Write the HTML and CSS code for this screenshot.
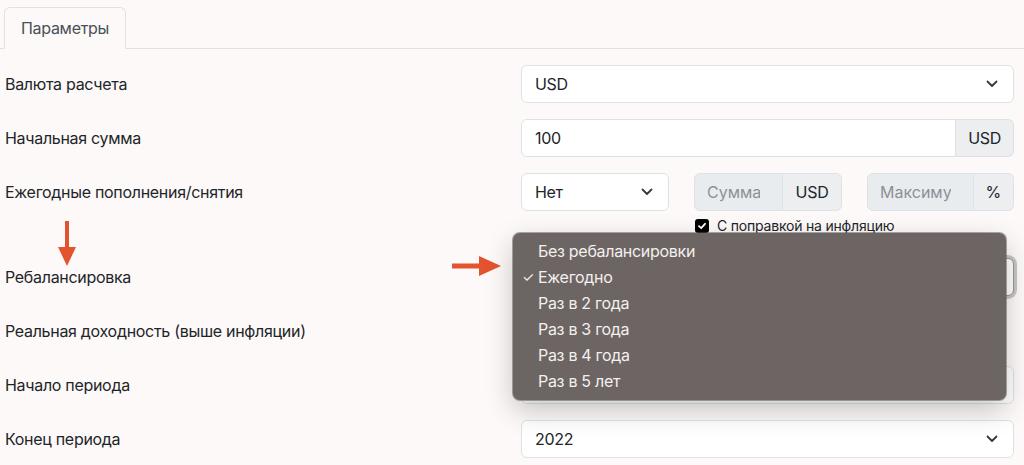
FILE: index.html
```html
<!DOCTYPE html>
<html lang="ru">
<head>
<meta charset="utf-8">
<link rel="stylesheet" href="styles.css">
</head>
<body>
<div class="tabs">
  <div class="tab">Параметры</div>
</div>
<div class="form">
  <div class="row">
    <div class="label">Валюта расчета</div>
    <div class="control">
      <div class="select"><span>USD</span><svg class="chev" viewBox="0 0 12 8" width="12" height="8"><polyline points="1.5,1.5 6,6 10.5,1.5"/></svg></div>
    </div>
  </div>
  <div class="row">
    <div class="label">Начальная сумма</div>
    <div class="control">
      <div class="group">
        <div class="input grow">100</div>
        <div class="addon">USD</div>
      </div>
    </div>
  </div>
  <div class="row">
    <div class="label">Ежегодные пополнения/снятия</div>
    <div class="control triple">
      <div class="select"><span>Нет</span><svg class="chev" viewBox="0 0 12 8" width="12" height="8"><polyline points="1.5,1.5 6,6 10.5,1.5"/></svg></div>
      <div class="group">
        <input class="input grow disabled" disabled placeholder="Сумма пополнения">
        <div class="addon wide">USD</div>
      </div>
      <div class="group">
        <input class="input grow disabled" disabled placeholder="Максимум изъятия">
        <div class="addon">%</div>
      </div>
      <label class="check"><span class="box"><svg viewBox="0 0 10 10" width="10" height="10"><polyline points="2,5.2 4.2,7.2 8,2.8"/></svg></span>С поправкой на инфляцию</label>
    </div>
  </div>
  <div class="row rebalance">
    <div class="label">Ребалансировка</div>
    <div class="control">
      <div class="select focused"><span></span><svg class="chev" viewBox="0 0 12 8" width="12" height="8"><polyline points="1.5,1.5 6,6 10.5,1.5"/></svg></div>
      <ul class="menu">
        <li>Без ребалансировки</li>
        <li class="checked">Ежегодно</li>
        <li>Раз в 2 года</li>
        <li>Раз в 3 года</li>
        <li>Раз в 4 года</li>
        <li>Раз в 5 лет</li>
      </ul>
    </div>
    <svg class="arrow-down" viewBox="0 0 18 45" width="18" height="45"><rect x="7" y="0" width="4" height="27"/><polygon points="0,26 18,26 9,45"/></svg>
    <svg class="arrow-right" viewBox="0 0 49 20" width="49" height="20"><rect x="0" y="7.5" width="28" height="5"/><polygon points="27,0 49,10 27,20"/></svg>
  </div>
  <div class="row">
    <div class="label">Реальная доходность (выше инфляции)</div>
    <div class="control">
      <div class="spacer"></div>
    </div>
  </div>
  <div class="row">
    <div class="label">Начало периода</div>
    <div class="control">
      <div class="select"><span></span><svg class="chev" viewBox="0 0 12 8" width="12" height="8"><polyline points="1.5,1.5 6,6 10.5,1.5"/></svg></div>
    </div>
  </div>
  <div class="row">
    <div class="label">Конец периода</div>
    <div class="control">
      <div class="select"><span>2022</span><svg class="chev" viewBox="0 0 12 8" width="12" height="8"><polyline points="1.5,1.5 6,6 10.5,1.5"/></svg></div>
    </div>
  </div>
</div>
</body>
</html>
```

FILE: styles.css
```css
* { box-sizing: border-box; }

body {
  margin: 0;
  background: #fdf9f8;
  color: #212529;
  font-family: "Inter", "Liberation Sans", sans-serif;
  font-size: 16px;
  line-height: 24px;
  letter-spacing: -0.3px;
  overflow: hidden;
}

.tabs {
  padding: 7px 0 0 4px;
  border-bottom: 1px solid #dee2e6;
  display: flex;
}

.tab {
  border: 1px solid #dee2e6;
  border-bottom-color: #fdf9f8;
  border-radius: 6px 6px 0 0;
  margin-bottom: -1px;
  padding: 8px 16px;
  color: #495057;
  background: #fdf9f8;
}

.form {
  padding: 16px 10px 0 5px;
}

.row {
  display: grid;
  grid-template-columns: 516px minmax(0, 1fr);
  align-items: start;
  margin-bottom: 16px;
  position: relative;
}

.label {
  line-height: 38px;
}

.control {
  position: relative;
  min-height: 38px;
}

.select {
  height: 38px;
  display: flex;
  align-items: center;
  justify-content: space-between;
  padding: 0 15px 0 13px;
  background: #fff;
  border: 1px solid #dee2e6;
  border-radius: 6px;
}

.select.focused {
  border-color: #9a9593;
  box-shadow: 0 0 0 3px #c9c5c3;
}

.chev polyline {
  fill: none;
  stroke: #343a40;
  stroke-width: 1.8;
  stroke-linecap: round;
  stroke-linejoin: round;
}

.group {
  display: flex;
  height: 38px;
  min-width: 0;
}

.input {
  height: 38px;
  padding: 0 13px;
  background: #fff;
  border: 1px solid #dee2e6;
  border-radius: 6px 0 0 6px;
  font: inherit;
  letter-spacing: -0.3px;
  line-height: 36px;
  color: #212529;
  min-width: 0;
  width: 0;
}

.input.grow { flex: 1 1 0; }

.input.disabled {
  background: #e9ecef;
  padding: 0 22px 0 12px;
  letter-spacing: 0;
}

.input.disabled::placeholder {
  color: #8c9196;
  opacity: 1;
}

.addon {
  height: 38px;
  line-height: 36px;
  padding: 0 12px;
  background: #eceeef;
  border: 1px solid #dee2e6;
  border-left: none;
  border-radius: 0 6px 6px 0;
  flex: none;
}

.addon.wide { width: 59px; text-align: center; padding: 0; }

.triple {
  display: grid;
  grid-template-columns: 148px 148px minmax(0, 1fr);
  column-gap: 25px;
}

.check {
  grid-column: 2 / 4;
  display: flex;
  align-items: center;
  gap: 8px;
  font-size: 14px;
  letter-spacing: -0.2px;
  line-height: 20px;
  padding: 5px 0 6px 1px;
}

.box {
  width: 14px;
  height: 14px;
  background: #000;
  border-radius: 3px;
  display: flex;
  align-items: center;
  justify-content: center;
}

.box polyline {
  fill: none;
  stroke: #fff;
  stroke-width: 1.8;
  stroke-linecap: round;
  stroke-linejoin: round;
}

.spacer {
  height: 38px;
}

.menu {
  position: absolute;
  left: -8px;
  top: -25px;
  width: 493px;
  margin: 0;
  padding: 5px 0 6px;
  list-style: none;
  background: #6c6563;
  border-radius: 7px;
  box-shadow: 0 0 0 1px rgba(90, 84, 82, 0.5), 0 10px 28px rgba(0, 0, 0, 0.22);
  color: #f4f0ee;
  z-index: 5;
}

.menu li {
  height: 26px;
  line-height: 26px;
  padding-left: 25px;
  position: relative;
}

.menu li.checked::before {
  content: "✓";
  position: absolute;
  left: 9px;
  font-size: 14px;
}

.arrow-down, .arrow-right {
  position: absolute;
  fill: #e4532f;
}

.arrow-down {
  left: 53px;
  top: -37px;
}

.arrow-right {
  left: 447px;
  top: -2px;
}
```
